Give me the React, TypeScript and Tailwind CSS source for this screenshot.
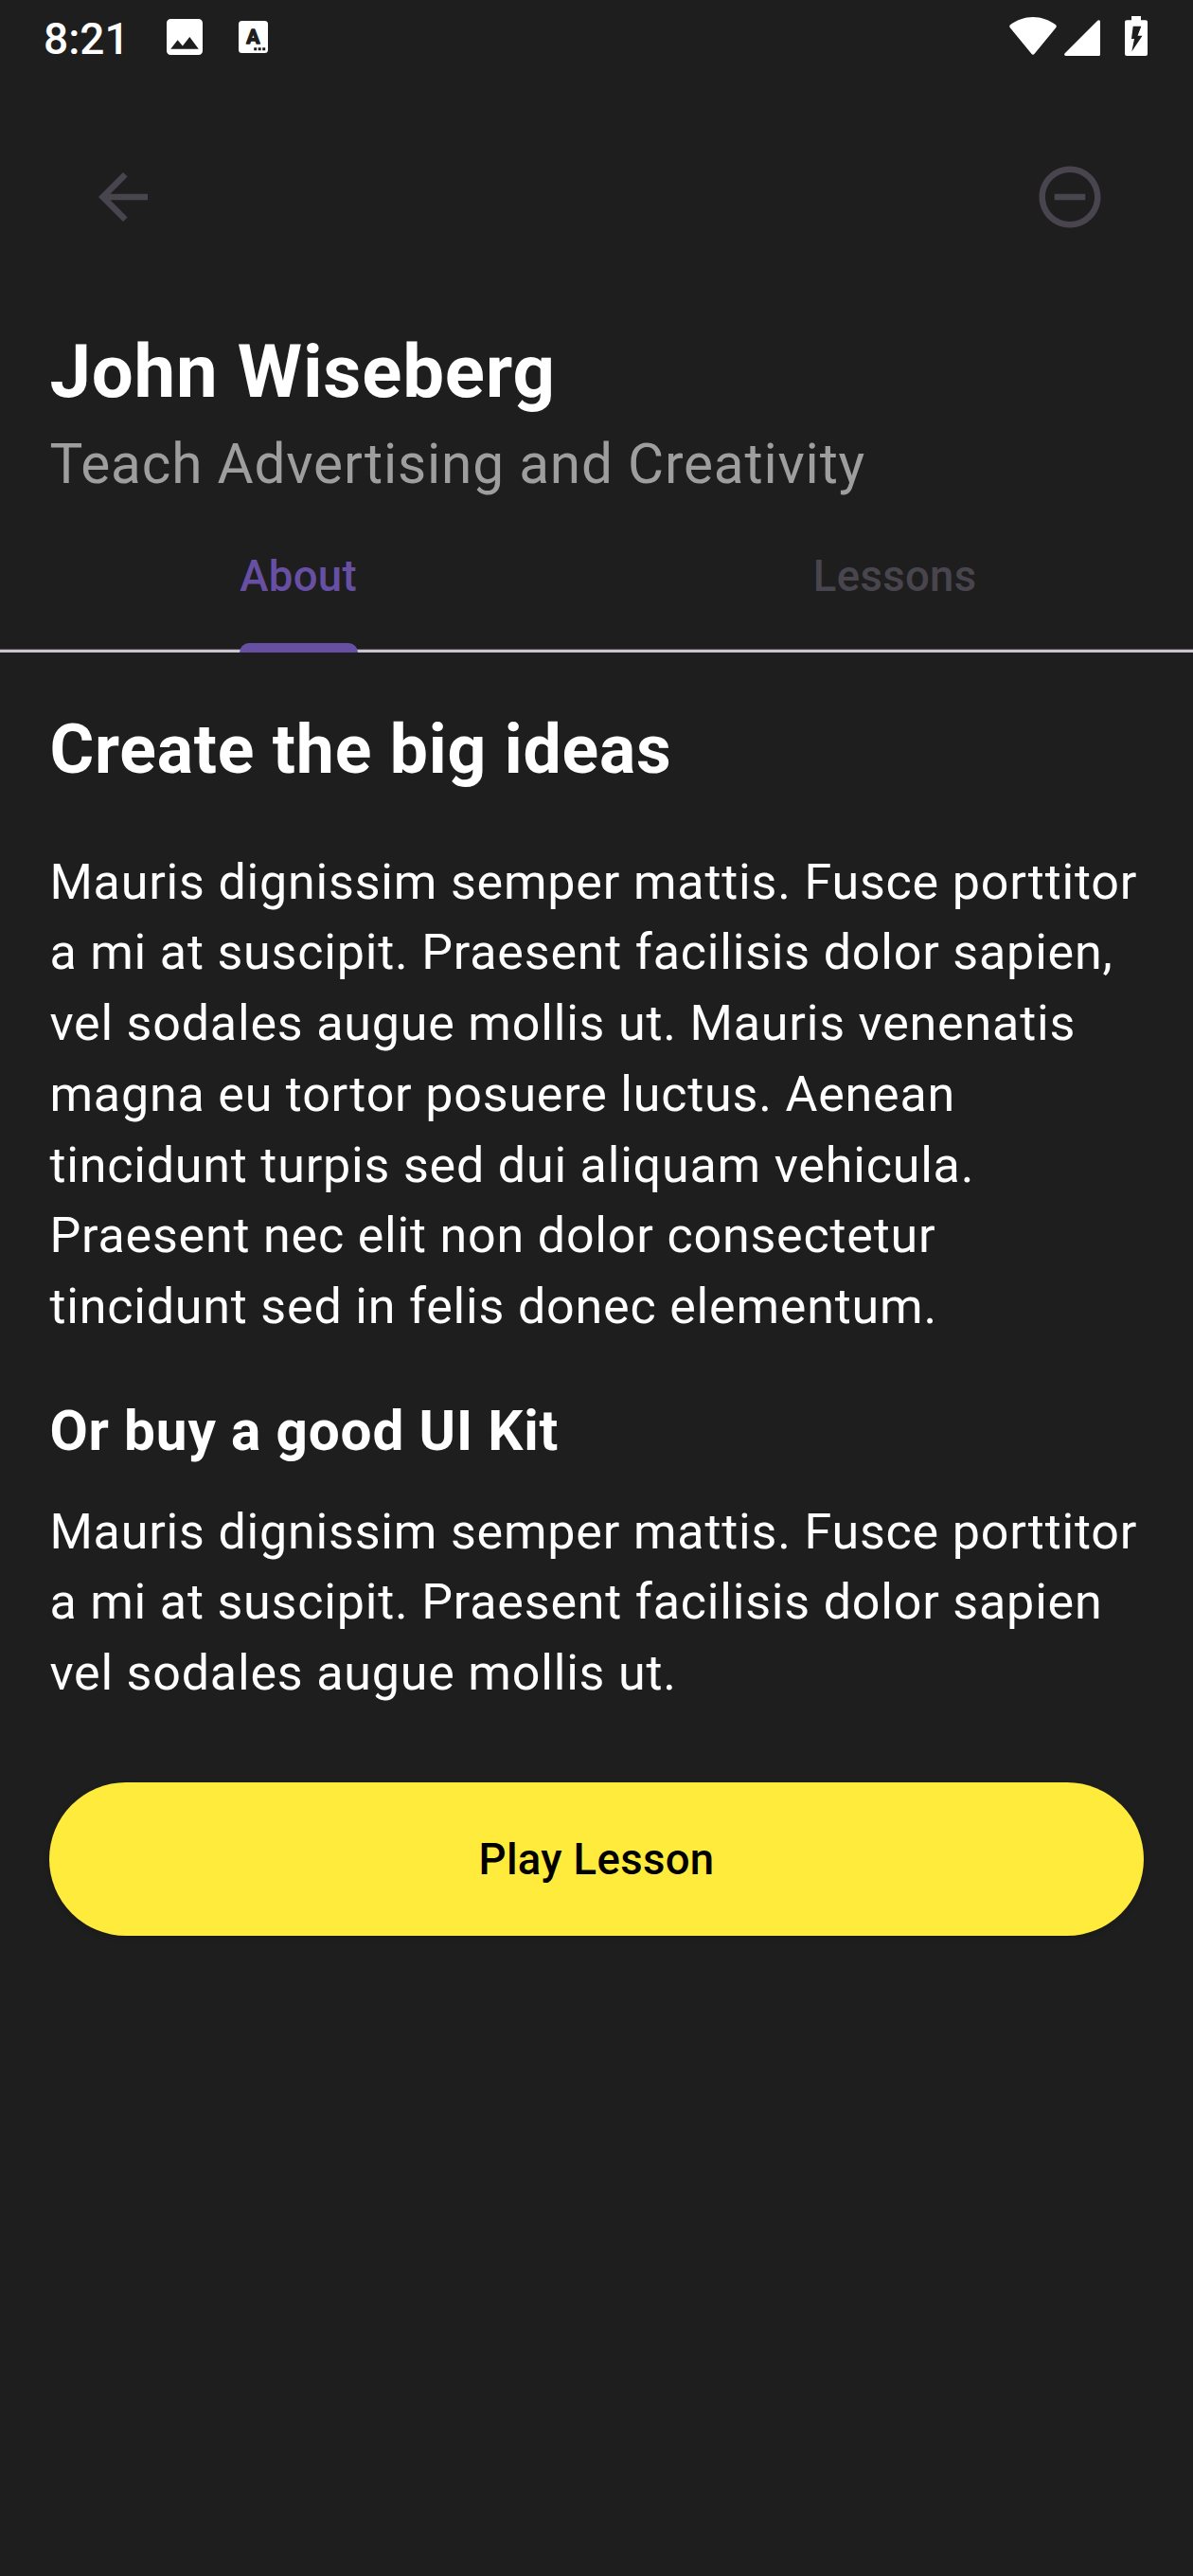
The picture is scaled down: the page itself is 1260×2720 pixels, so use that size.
const body = "pl-[0.4px] text-[52px] leading-[74.75px] tracking-[0.8125px] whitespace-nowrap";

const intro = [
  "Mauris dignissim semper mattis. Fusce porttitor",
  "a mi at suscipit. Praesent facilisis dolor sapien,",
  "vel sodales augue mollis ut. Mauris venenatis",
  "magna eu tortor posuere luctus. Aenean",
  "tincidunt turpis sed dui aliquam vehicula.",
  "Praesent nec elit non dolor consectetur",
  "tincidunt sed in felis donec elementum.",
];

const kit = [
  "Mauris dignissim semper mattis. Fusce porttitor",
  "a mi at suscipit. Praesent facilisis dolor sapien",
  "vel sodales augue mollis ut.",
];

function Paragraph({ lines, className }: { lines: string[]; className: string }) {
  return (
    <p className={className}>
      {lines.map((line) => (
        <span key={line} className="block">
          {line}
        </span>
      ))}
    </p>
  );
}

function StatusBar() {
  return (
    <div className="flex h-20 shrink-0 items-start pl-[46px] pr-12">
      <span className="mt-[9px] w-[130px] text-[46px] leading-[64px] font-medium">8:21</span>
      <svg className="mt-5 h-[38px] w-[38px]" viewBox="3 3 18 18" fill="currentColor">
        <path d="M21 19V5c0-1.1-.9-2-2-2H5c-1.1 0-2 .9-2 2v14c0 1.1.9 2 2 2h14c1.1 0 2-.9 2-2zM8.5 13.5l2.5 3.01L14.5 12l4.5 6H5l3.5-4.5z" />
      </svg>
      <svg className="mt-[22px] ml-[38px] h-[34px] w-[31px]" viewBox="0 0 31 34">
        <rect width="31" height="34" rx="3.5" fill="#fff" />
        <text x="15.3" y="24" textAnchor="middle" fontFamily="Roboto" fontWeight="700" fontSize="21" fill="#1e1e1e" stroke="#1e1e1e" strokeWidth="1.4" strokeLinejoin="round">
          A
        </text>
        <path d="M16.2 28.3h3v3h-3zM20.7 28.3h3v3h-3zM25.2 28.3h3v3h-3z" fill="#1e1e1e" />
      </svg>
      <div className="flex-1" />
      <svg className="mt-[18px] h-10 w-[50px]" viewBox="0 0 50 40" fill="currentColor">
        <path d="M0.8 11.2C-0.1 10.1 0.1 8.9 1.2 8C8 3 16.200 0 25 0S42 3 48.800 8C49.900 8.900 50.100 10.100 49.200 11.200L26.600 38.800C25.700 40 24.300 40 23.400 38.800Z" />
      </svg>
      <svg className="mt-[21px] ml-2 h-[38px] w-[38px]" viewBox="0 0 38 38" fill="currentColor">
        <path d="M35.200 .7C36.300-.4 38 .2 38 1.800V36.500Q38 38 36.500 38H1.800C.1 38-.5 36.400.7 35.200Z" />
      </svg>
      <svg className="mt-[17px] ml-[26px] h-[42px] w-6" viewBox="0 0 24 42" fill="currentColor">
        <path fillRule="evenodd" d="M7 0H17V4.300H22Q24 4.300 24 6.300V40Q24 42 22 42H2Q0 42 0 40V6.300Q0 4.300 2 4.300H7ZM8.700 10.700L7 24H10L7.300 37.500L18.500 20.700H13.500L17.300 10.700Z" />
      </svg>
    </div>
  );
}

export default function App() {
  return (
    <div className="flex h-[2720px] w-[1260px] flex-col overflow-hidden bg-[#1e1e1e] font-['Roboto',sans-serif] text-white">
      <StatusBar />
      <header className="flex h-64 shrink-0 items-center justify-between px-[91px] text-[#49454f]">
        <button aria-label="Back">
          <svg className="size-[78px]" viewBox="0 0 24 24" fill="currentColor">
            <path d="M20 11H7.830l5.590-5.590L12 4l-8 8 8 8 1.410-1.410L7.830 13H20v-2z" />
          </svg>
        </button>
        <button aria-label="Remove">
          <svg className="size-[78px]" viewBox="0 0 24 24" fill="currentColor">
            <path d="M7 11v2h10v-2H7zm5-9C6.480 2 2 6.480 2 12s4.480 10 10 10 10-4.480 10-10S17.520 2 12 2zm0 18c-4.410 0-8-3.590-8-8s3.590-8 8-8 8 3.590 8 8-3.590 8-8 8z" />
          </svg>
        </button>
      </header>
      <section className="h-[196px] shrink-0 px-[52.4px] pt-px">
        <h1 className="-mb-px text-[78px] leading-[112px] font-bold tracking-[0.8125px]">John Wiseberg</h1>
        <p className="text-[58.5px] leading-[84px] tracking-[0.8125px] text-[#9e9e9e]">Teach Advertising and Creativity</p>
      </section>
      <nav className="grid h-[157px] shrink-0 grid-cols-2 border-b-[3px] border-[#cac4d0] pt-[45px] text-[45.5px] leading-[64px] font-medium tracking-[0.325px] shadow-[inset_0_-1px_0_#49474c]">
        <button className="relative mx-auto text-[#6750a4]">
          <span className="block h-[109px] pl-[0.3px]">About</span>
          <span className="absolute -right-px left-0 -bottom-[3px] h-[10px] rounded-t-[10px] bg-[#6750a4]" />
        </button>
        <button className="mx-auto text-[#49454f]">
          <span className="block h-[109px] pl-[0.3px]">Lessons</span>
        </button>
      </nav>
      <main className="flex flex-col px-[52px] pt-[52px]">
        <h2 className="pl-[0.4px] text-[71.5px] leading-[102px] font-bold tracking-[0.8125px]">Create the big ideas</h2>
        <Paragraph lines={intro} className={`mt-[51.5px] ${body}`} />
        <h3 className="mt-[51.25px] pl-[0.4px] text-[58.5px] leading-[84px] font-bold tracking-[0.8125px]">Or buy a good UI Kit</h3>
        <Paragraph lines={kit} className={`mt-[27.5px] ${body}`} />
        <button className="mt-[76.75px] h-[162.5px] rounded-full bg-[#ffeb3b] pt-[2px] text-[45.5px] leading-[64px] font-medium tracking-[0.325px] text-black shadow-[0_3px_6px_rgba(0,0,0,0.15)]">
          Play Lesson
        </button>
      </main>
    </div>
  );
}
